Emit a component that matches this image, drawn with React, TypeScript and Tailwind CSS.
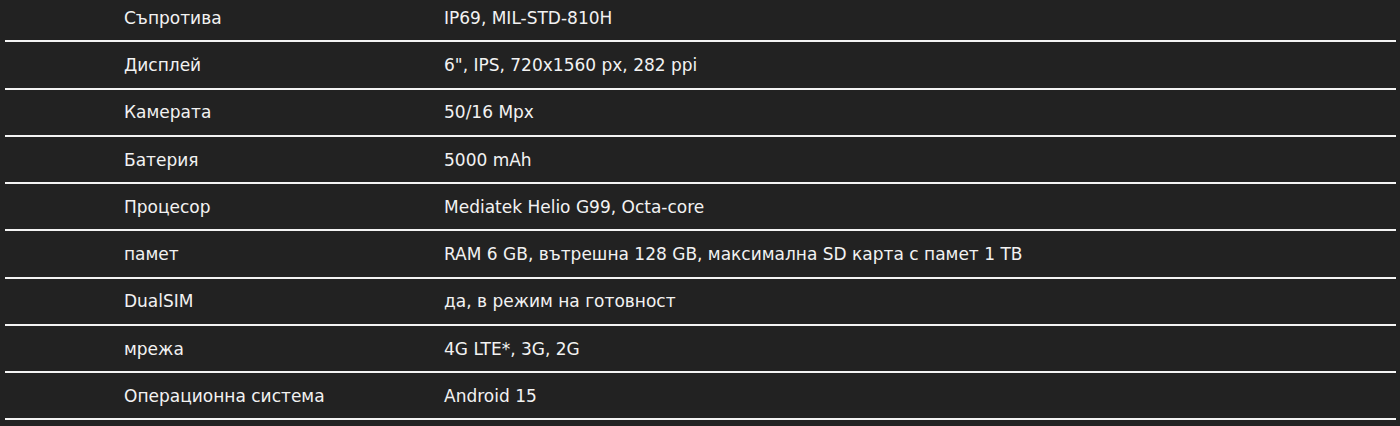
import React from "react";

const rows: [string, string][] = [
  ["Съпротива", "IP69, MIL-STD-810H"],
  ["Дисплей", "6\", IPS, 720x1560 px, 282 ppi"],
  ["Камерата", "50/16 Mpx"],
  ["Батерия", "5000 mAh"],
  ["Процесор", "Mediatek Helio G99, Octa-core"],
  ["памет", "RAM 6 GB, вътрешна 128 GB, максимална SD карта с памет 1 TB"],
  ["DualSIM", "да, в режим на готовност"],
  ["мрежа", "4G LTE*, 3G, 2G"],
  ["Операционна система", "Android 15"],
];

export default function App() {
  return (
    <div className="w-[1400px] h-[426px] overflow-hidden bg-[#222222] text-[#f2f2f2] font-['DejaVu_Sans',sans-serif]">
      <div className="-mt-[5px] ml-[5px] w-[1391px]">
        {rows.map(([k, v], i) => (
          <div
            key={i}
            className="h-[47.25px] pt-[2px] flex items-center border-b-2 border-[#f4f4f4] text-[17px]"
          >
            <div className="w-[439px] pl-[119px] shrink-0">{k}</div>
            <div>{v}</div>
          </div>
        ))}
      </div>
    </div>
  );
}
